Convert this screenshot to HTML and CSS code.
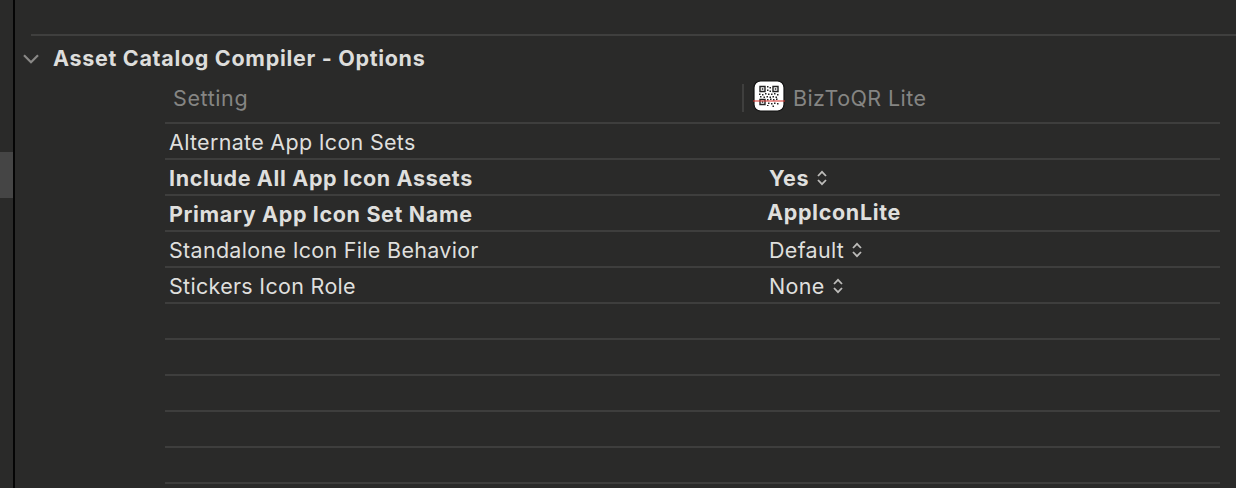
FILE: index.html
```html
<!DOCTYPE html>
<html lang="en">
<head>
<meta charset="utf-8">
<title>Asset Catalog Compiler - Options</title>
<link rel="stylesheet" href="styles.css">
</head>
<body>
<div class="app">
  <aside class="sidebar"><div class="sidebar-selection"></div></aside>
  <main class="editor">
    <div class="top-rule"></div>
    <div class="section-head">
      <svg class="chevron" width="16" height="10" viewBox="0 0 16 10"><path d="M1 1.200 8 8.200 15 1.200" fill="none" stroke="#8a8987" stroke-width="2.200"/></svg>
      <h2 class="section-title">Asset Catalog Compiler - Options</h2>
    </div>
    <div class="table">
      <div class="row head">
        <div class="col-name head-name">Setting</div>
        <div class="col-val head-val">
          <span class="head-divider"></span>
          <svg class="app-icon" width="32" height="32" viewBox="0 0 32 32">
            <rect x="1" y="1" width="30" height="30" rx="6.500" fill="#fff" stroke="#111" stroke-width="1.200"/>
            <g fill="#222">
              <path d="M7 6.500h5v5H7zM20 6.500h5v5h-5zM7 19.500h5v5H7z" fill="none" stroke="#222" stroke-width="1.400"/>
              <path d="M8.800 8.300h1.500v1.500H8.800zM21.800 8.300h1.500v1.500h-1.500zM8.800 21.300h1.500v1.500H8.800z"/>
              <path d="M14 6h1.500v1.500H14zM16.500 7h1.500v1.500h-1.500zM14 9.500h1.500V11H14zM16.500 10.500h1.500V12h-1.500zM6 13.500h1.500V15H6zM9 14h1.500v1.500H9zM12 13h1.500v1.500H12zM15 13.500h1.500V15H15zM18 13.500h1.500V15H18zM21 13h1.500v1.500H21zM24 14h1.500v1.500H24zM7 16h1.500v1.500H7zM10.500 16.500H12V18h-1.500zM13.500 16h1.500v1.500h-1.500zM16.500 16.500H18V18h-1.500zM19.500 16H21v1.500h-1.500zM22.500 16.500H24V18h-1.500zM14 19h1.500v1.500H14zM17 18.500h1.500V20H17zM20 19h1.500v1.500H20zM23 18.500h1.500V20H23zM15 22.500h1.500V24H15zM18 23h1.500v1.500H18zM21 22.500h1.500V24H21zM24 23h1.500v1.500H24zM14 25h1.500v1H14zM19.500 25.500H21V27h-1.500z"/>
            </g>
            <rect x="0" y="20.500" width="32" height="1" fill="#d8322c"/>
          </svg>
          <span class="app-name">BizToQR Lite</span>
        </div>
      </div>
      <div class="row"><div class="col-name">Alternate App Icon Sets</div><div class="col-val"></div></div>
      <div class="row"><div class="col-name bold">Include All App Icon Assets</div><div class="col-val bold">Yes<svg class="stepper" width="10" height="16" viewBox="0 0 10 16"><path d="M1 6 5 1.800 9 6M1 10 5 14.200 9 10" fill="none" stroke="#bdbcba" stroke-width="1.800"/></svg></div></div>
      <div class="row"><div class="col-name bold">Primary App Icon Set Name</div><div class="col-val bold raised">AppIconLite</div></div>
      <div class="row"><div class="col-name">Standalone Icon File Behavior</div><div class="col-val">Default<svg class="stepper" width="10" height="16" viewBox="0 0 10 16"><path d="M1 6 5 1.800 9 6M1 10 5 14.200 9 10" fill="none" stroke="#bdbcba" stroke-width="1.800"/></svg></div></div>
      <div class="row"><div class="col-name">Stickers Icon Role</div><div class="col-val">None<svg class="stepper" width="10" height="16" viewBox="0 0 10 16"><path d="M1 6 5 1.800 9 6M1 10 5 14.200 9 10" fill="none" stroke="#bdbcba" stroke-width="1.800"/></svg></div></div>
      <div class="row"></div>
      <div class="row"></div>
      <div class="row"></div>
      <div class="row"></div>
      <div class="row"></div>
    </div>
  </main>
</div>
</body>
</html>
```
FILE: styles.css
```css
* { box-sizing: border-box; }
html, body { margin: 0; height: 100%; overflow: hidden; background: #2a2a29; }
body { font-family: Inter, "Liberation Sans", sans-serif; color: #dfdfdd; }
.app { display: flex; width: 1236px; height: 488px; }
.sidebar { width: 15px; flex: none; border-right: 2px solid #050505; padding-top: 152px; }
.sidebar-selection { height: 46px; background: #454545; }
.editor { flex: 1; min-width: 0; padding-top: 34px; }
.top-rule { height: 2px; margin-left: 16px; background: #3f3f3e; }
.section-head { display: flex; align-items: center; height: 44px; padding-left: 8px; }
.chevron { flex: none; margin-right: 14px; margin-top: 2px; }
.section-title { margin: 0; font-size: 21.500px; font-weight: 700; color: #dddddb; letter-spacing: 0.690px; }
.table { margin: 0 16px 0 150px; }
.row { display: flex; align-items: center; height: 36px; padding-top: 2px; border-bottom: 2px solid #3e3e3d; font-size: 21.500px; letter-spacing: 0.300px; }
.head { height: 44px; padding-top: 0; padding-bottom: 7px; }
.col-name { width: 604px; flex: none; padding-left: 4px; }
.col-val { display: flex; align-items: center; }
.bold { font-weight: 700; letter-spacing: 0.640px; }
.head-name { padding-left: 8px; color: #858583; letter-spacing: 0.600px; }
.head-val { margin-left: -27px; }
.head-divider { width: 2px; height: 28px; margin-right: 9px; background: #3f3f3e; }
.app-icon { flex: none; margin-right: 8px; margin-bottom: 4px; }
.app-name { color: #858583; letter-spacing: 0.400px; }
.stepper { flex: none; margin-left: 8px; }
.raised { margin-left: -2px; margin-top: -4px; }
```
